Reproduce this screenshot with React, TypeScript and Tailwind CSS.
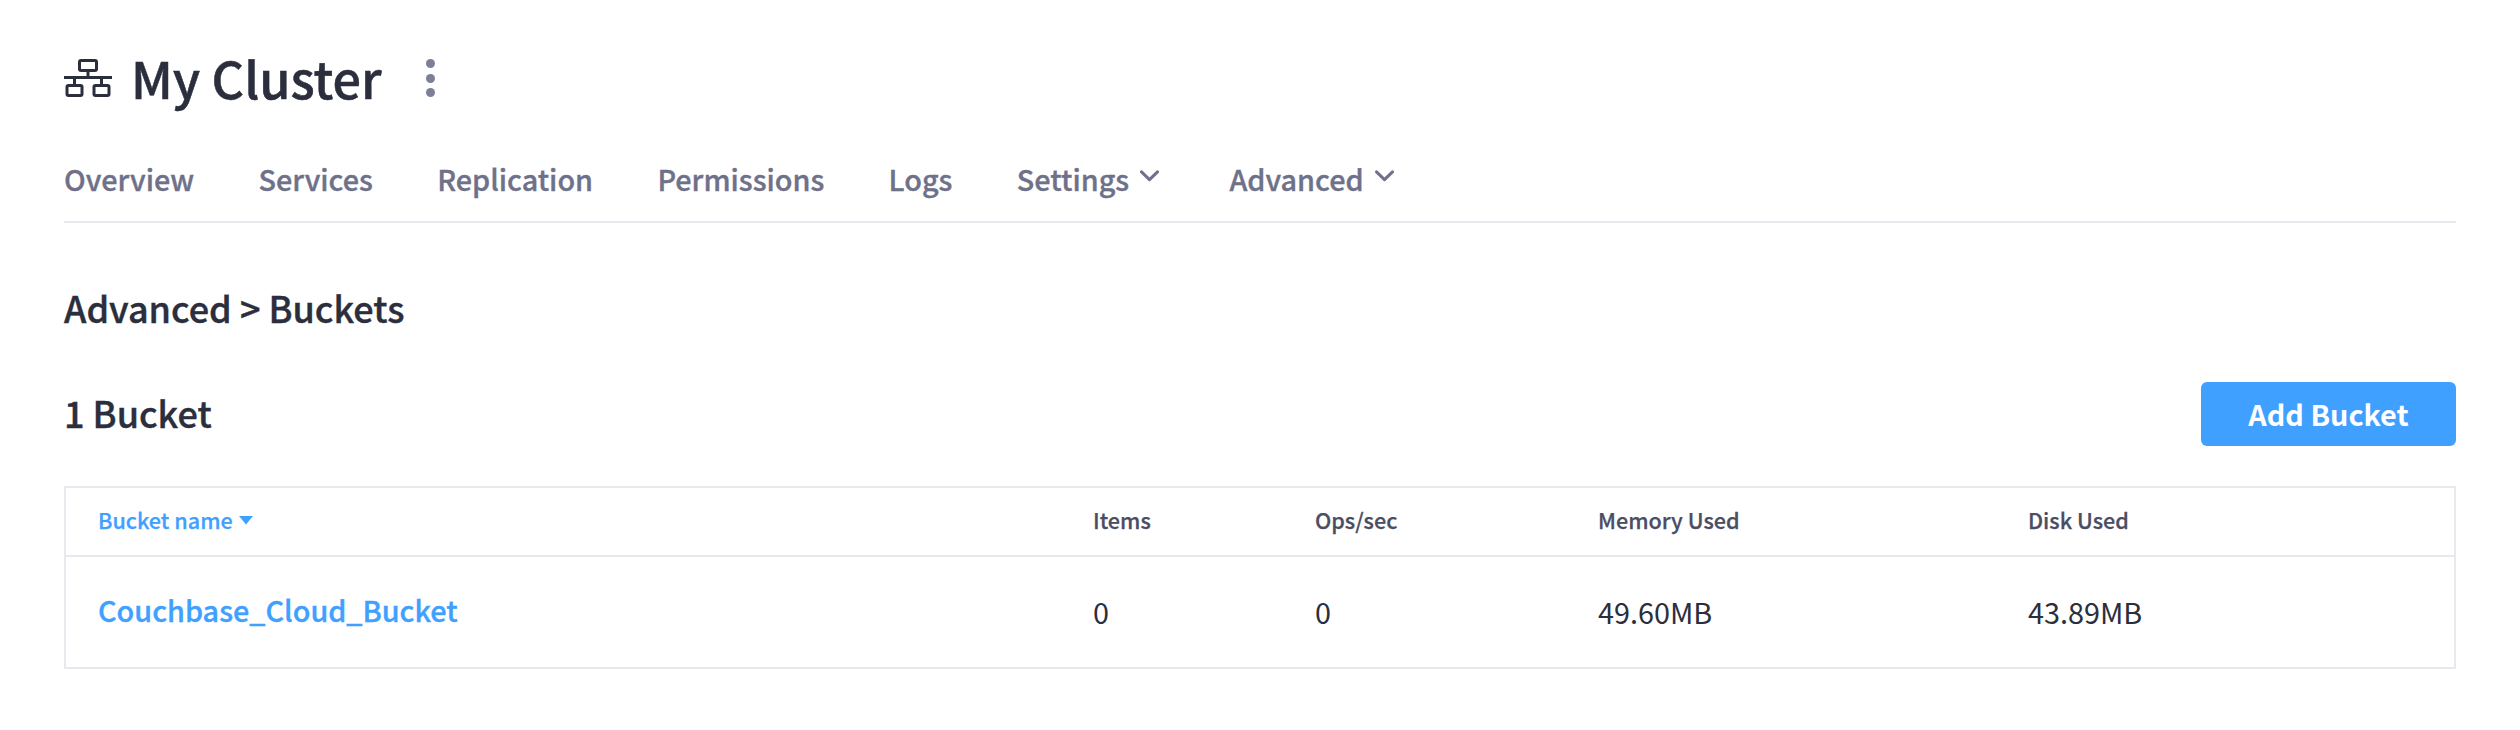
import React from "react";

function Chevron() {
  return (
    <svg width="19" height="12" viewBox="0 0 20 12" fill="none" className="ml-[11px] mr-[6px] mt-[-6px]">
      <path d="M1.6 1.6 L10 9.8 L18.4 1.6" stroke="#6e7189" strokeWidth="3.2" strokeLinecap="round" strokeLinejoin="round" />
    </svg>
  );
}

function ClusterIcon() {
  return (
    <svg width="48" height="38" viewBox="0 0 48 38" fill="none" stroke="#2b2e3c" strokeWidth="3" className="shrink-0">
      <rect x="15.5" y="1.5" width="17" height="10" rx="1.5" />
      <path d="M24 11.5 V18" />
      <path d="M0 18.5 H48" />
      <path d="M10.5 18.5 V26 M37.5 18.5 V26" />
      <rect x="3" y="26.5" width="15" height="10" rx="1.5" />
      <rect x="30" y="26.5" width="15" height="10" rx="1.5" />
    </svg>
  );
}

export default function App() {
  const cols = "grid grid-cols-[995px_222px_283px_430px_1fr] items-center";
  return (
    <div className="min-h-[730px] bg-white px-16 pt-[48px] font-['Noto_Sans_CJK_SC','Noto_Sans',sans-serif] text-[#2b2e3c]">
      <div className="flex h-[60px] items-center">
        <ClusterIcon />
        <h1 className="ml-[19px] text-[50.4px] leading-[60px] font-medium [-webkit-text-stroke:0.5px_currentColor]">My Cluster</h1>
        <div className="ml-[44px] flex flex-col gap-[5.5px]">
          <span className="h-[9px] w-[9px] rounded-full bg-[#7c7f98]" />
          <span className="h-[9px] w-[9px] rounded-full bg-[#7c7f98]" />
          <span className="h-[9px] w-[9px] rounded-full bg-[#7c7f98]" />
        </div>
      </div>

      <nav className="mt-[41px] flex h-[74px] gap-[64.3px] border-b-2 border-[#e8e8ef] text-[28.8px] leading-[60px] font-medium text-[#6e7189] [-webkit-text-stroke:0.35px_currentColor]">
        <span>Overview</span>
        <span>Services</span>
        <span>Replication</span>
        <span>Permissions</span>
        <span>Logs</span>
        <span className="flex h-[60px] items-center">Settings<Chevron /></span>
        <span className="flex h-[60px] items-center">Advanced<Chevron /></span>
      </nav>

      <h2 className="mt-[60px] text-[36px] leading-[48px] font-medium [-webkit-text-stroke:0.4px_currentColor]">Advanced &gt; Buckets</h2>

      <div className="mt-[51px] flex h-[64px] items-center justify-between">
        <h3 className="mt-[-4px] text-[36px] leading-[48px] font-medium [-webkit-text-stroke:0.4px_currentColor]">1 Bucket</h3>
        <button className="h-[64px] w-[255px] rounded-[6px] bg-[#40a0ff] text-[28.8px] font-bold text-white">Add Bucket</button>
      </div>

      <div className="mt-[40px] border-2 border-[#e8e8ef]">
        <div className={`${cols} h-[69px] border-b-2 border-[#e8e8ef] pb-[2px] pl-[32px] text-[21.6px] font-medium text-[#4a4d63] [-webkit-text-stroke:0.25px_currentColor]`}>
          <div className="flex items-center text-[#40a0ff]">
            Bucket name
            <svg width="14" height="9" viewBox="0 0 14 9" className="ml-[6px]"><path d="M0 0 H14 L7 8.5 Z" fill="#40a0ff" /></svg>
          </div>
          <div>Items</div>
          <div>Ops/sec</div>
          <div>Memory Used</div>
          <div>Disk Used</div>
        </div>
        <div className={`${cols} h-[110px] pl-[32px] text-[28.8px]`}>
          <div className="mt-[-4px] font-medium text-[#40a0ff] [-webkit-text-stroke:0.35px_currentColor]">Couchbase_Cloud_Bucket</div>
          <div>0</div>
          <div>0</div>
          <div>49.60MB</div>
          <div>43.89MB</div>
        </div>
      </div>
    </div>
  );
}
